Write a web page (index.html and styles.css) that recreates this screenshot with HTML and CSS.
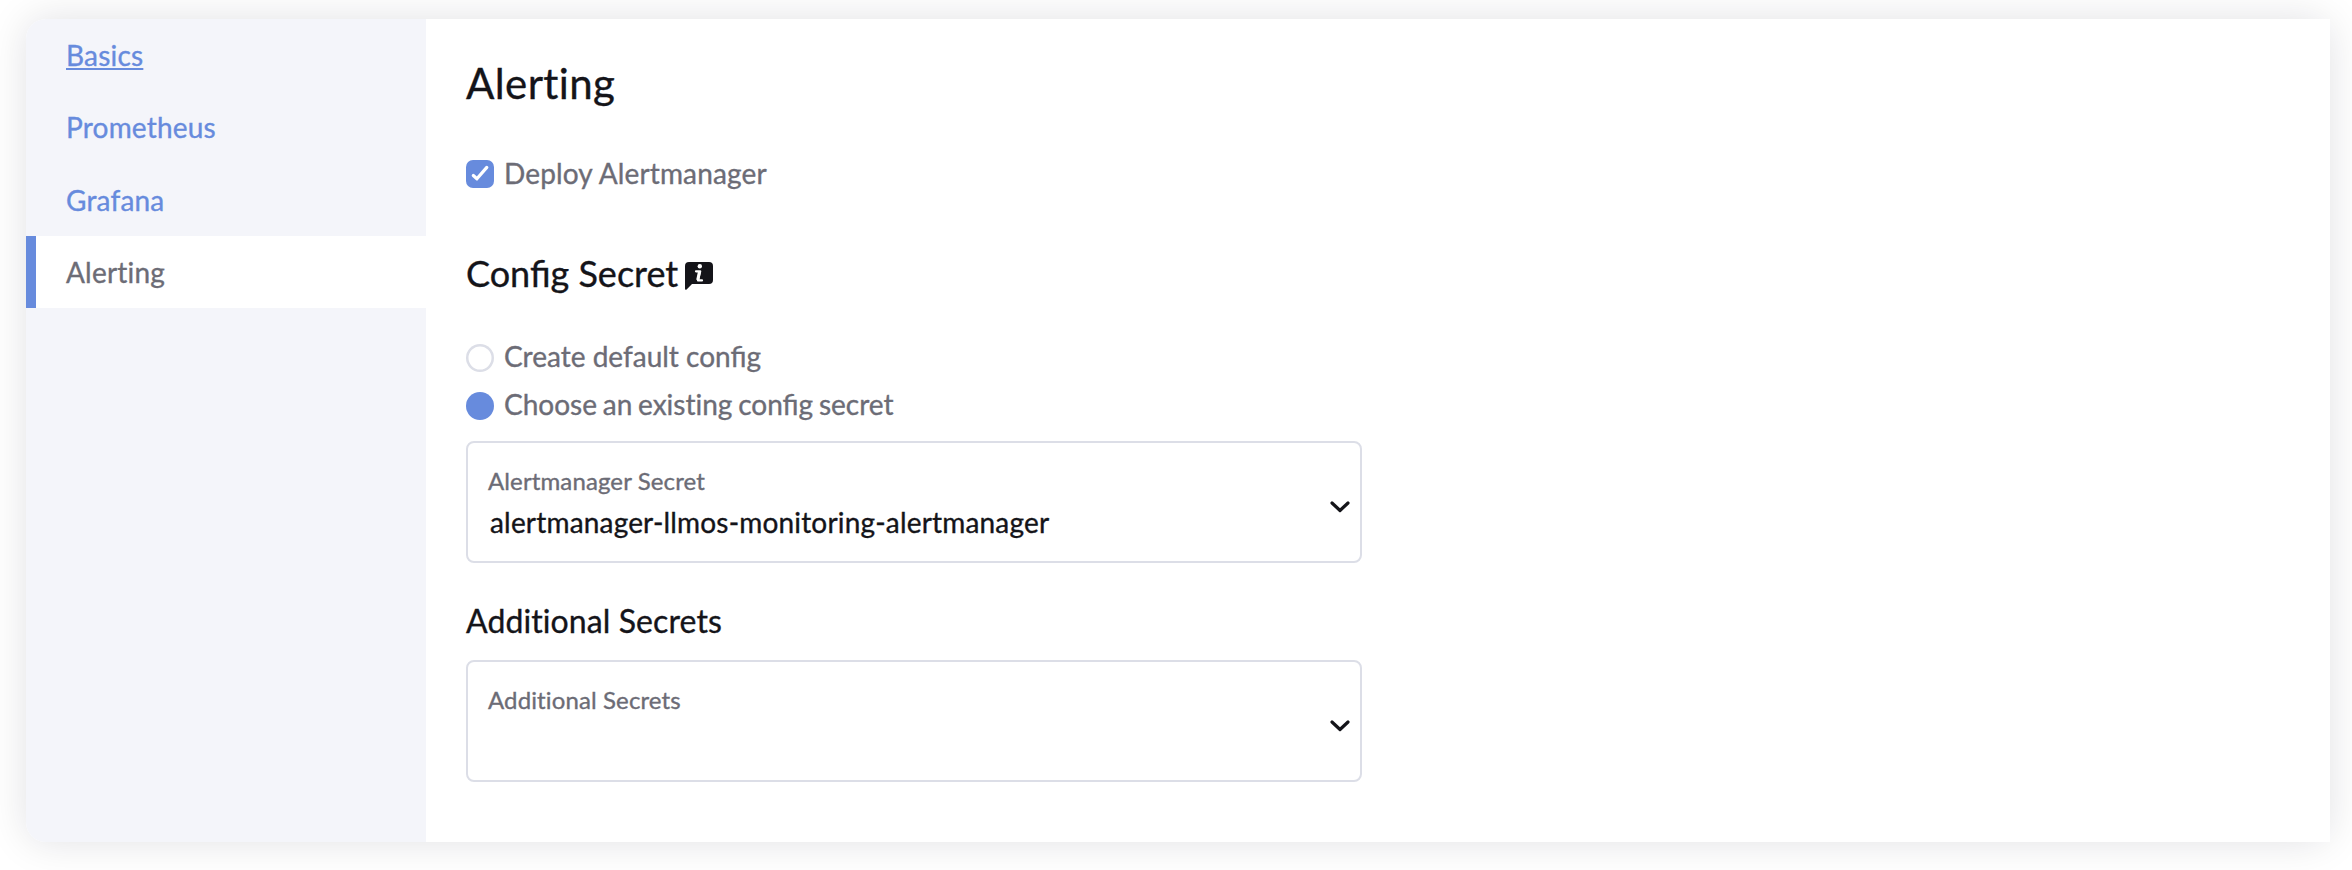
FILE: index.html
```
<!DOCTYPE html>
<html lang="en">
<head>
<meta charset="utf-8">
<title>Alerting</title>
<link rel="stylesheet" href="styles.css">
</head>
<body>
<div class="card">
  <nav class="tabs">
    <a class="tab tab-focused">Basics</a>
    <a class="tab">Prometheus</a>
    <a class="tab">Grafana</a>
    <a class="tab tab-active">Alerting</a>
  </nav>
  <main class="content">
    <h2 class="title">Alerting</h2>
    <label class="option">
      <span class="checkbox"><svg width="28" height="28" viewBox="0 0 28 28"><path d="M7.3 15.5 L10.9 18.8 L20.8 7.4" fill="none" stroke="#fff" stroke-width="3.2" stroke-linecap="round" stroke-linejoin="round"/></svg></span>
      <span class="option-text">Deploy Alertmanager</span>
    </label>
    <h3 class="subtitle">
      <span>Config Secret</span>
      <svg class="info" width="28" height="28" viewBox="0 0 28 28"><path d="M4 0H24Q28 0 28 4V18Q28 22 24 22H7L1.6 27.4Q0 28.4 0 26.5V4Q0 0 4 0Z" fill="#141419"/><circle cx="14.8" cy="4.3" r="2.2" fill="#fff"/><path d="M11 9.3H15.2L13 18.4H17" fill="none" stroke="#fff" stroke-width="2.2" stroke-linecap="round" stroke-linejoin="round"/><path d="M14.5 9.4L12.7 18" stroke="#fff" stroke-width="3"/></svg>
    </h3>
    <div class="radios">
      <label class="option"><span class="radio"></span><span class="radio-text">Create default config</span></label>
      <label class="option"><span class="radio radio-on"></span><span class="radio-text radio-text-long">Choose an <span class="plain">existing</span> config secret</span></label>
    </div>
    <div class="select">
      <div class="select-text">
        <div class="select-label">Alertmanager Secret</div>
        <div class="select-value">alertmanager-llmos-monitoring-alertmanager</div>
      </div>
      <svg class="chevron" width="20" height="12" viewBox="0 0 20 12"><path d="M2 2L10 9.5L18 2" fill="none" stroke="#141419" stroke-width="3.2" stroke-linecap="round" stroke-linejoin="round"/></svg>
    </div>
    <h4 class="section">Additional Secrets</h4>
    <div class="select">
      <div class="select-text">
        <div class="select-label">Additional Secrets</div>
      </div>
      <svg class="chevron" width="20" height="12" viewBox="0 0 20 12"><path d="M2 2L10 9.5L18 2" fill="none" stroke="#141419" stroke-width="3.2" stroke-linecap="round" stroke-linejoin="round"/></svg>
    </div>
  </main>
</div>
</body>
</html>
```
FILE: styles.css
```
* { box-sizing: border-box; }
body {
  margin: 0;
  height: 870px;
  overflow: hidden;
  padding: 19px 22px 28px 26px;
  background: #fff;
  color: #141419;
  font: 28px/34px Lato, sans-serif;
  -webkit-text-stroke: 0.35px currentColor;
}
.card {
  display: flex;
  height: 823px;
  border-radius: 20px;
  box-shadow: 0 0 40px rgba(20, 20, 35, 0.12);
}
.tabs {
  width: 400px;
  padding-top: 1px;
  background: #f4f5fa;
  border-radius: 20px 0 0 20px;
}
.tab {
  display: block;
  height: 72px;
  padding: 19px 0 0 40px;
  color: #678bdd;
  letter-spacing: 0.2px;
}
.tab:nth-child(2) { padding-top: 18px; }
.tab-focused {
  padding-top: 18px;
  text-decoration: underline;
}
.tab-active {
  padding-left: 30px;
  border-left: 10px solid #678bdd;
  background: #fff;
  color: #6c6c76;
}
.content {
  flex: 1;
  padding: 39px 40px;
  background: #fff;
}
.title, .subtitle, .section {
  margin: 0;
  font-weight: 400;
}
.title {
  font-size: 42px;
  line-height: 50px;
  letter-spacing: 0.4px;
}
.title, .section, .select, .plain, .tab { font-variant-ligatures: none; }
.option {
  display: flex;
  align-items: center;
  gap: 10px;
  height: 34px;
  color: #6c6c76;
}
.title + .option { margin-top: 49px; }
.option-text {
  padding-bottom: 2px;
  letter-spacing: 0.15px;
}
.radio-text { padding-bottom: 4px; }
.radio-text-long { word-spacing: -1.4px; }
.checkbox {
  width: 28px;
  height: 28px;
  border-radius: 7px;
  background: #678bdd;
}
.checkbox svg { display: block; }
.subtitle {
  display: flex;
  gap: 7px;
  margin-top: 61px;
  font-size: 36px;
  line-height: 43px;
}
.info { margin-top: 10px; }
.radios {
  display: grid;
  gap: 14px;
  margin-top: 46px;
}
.radio {
  width: 28px;
  height: 28px;
  border-radius: 50%;
  box-shadow: inset 0 0 0 2.5px #dcdee7;
}
.radio-on {
  background: #678bdd;
  box-shadow: none;
}
.select {
  display: flex;
  align-items: center;
  justify-content: space-between;
  width: 896px;
  height: 122px;
  margin-top: 18px;
  padding: 0 10px 0 20px;
  border: 2px solid #dcdee7;
  border-radius: 8px;
}
.select-text {
  align-self: flex-start;
  padding-top: 23px;
}
.select-label {
  color: #6c6c76;
  font-size: 24px;
  line-height: 29px;
  letter-spacing: 0.12px;
}
.select-value {
  margin-top: 10px;
  padding-left: 2px;
  letter-spacing: 0.18px;
}
.chevron { margin-top: 10px; }
.section {
  margin-top: 39px;
  font-size: 32px;
  line-height: 38px;
  letter-spacing: 0.1px;
}
.section + .select { margin-top: 20px; }
```
